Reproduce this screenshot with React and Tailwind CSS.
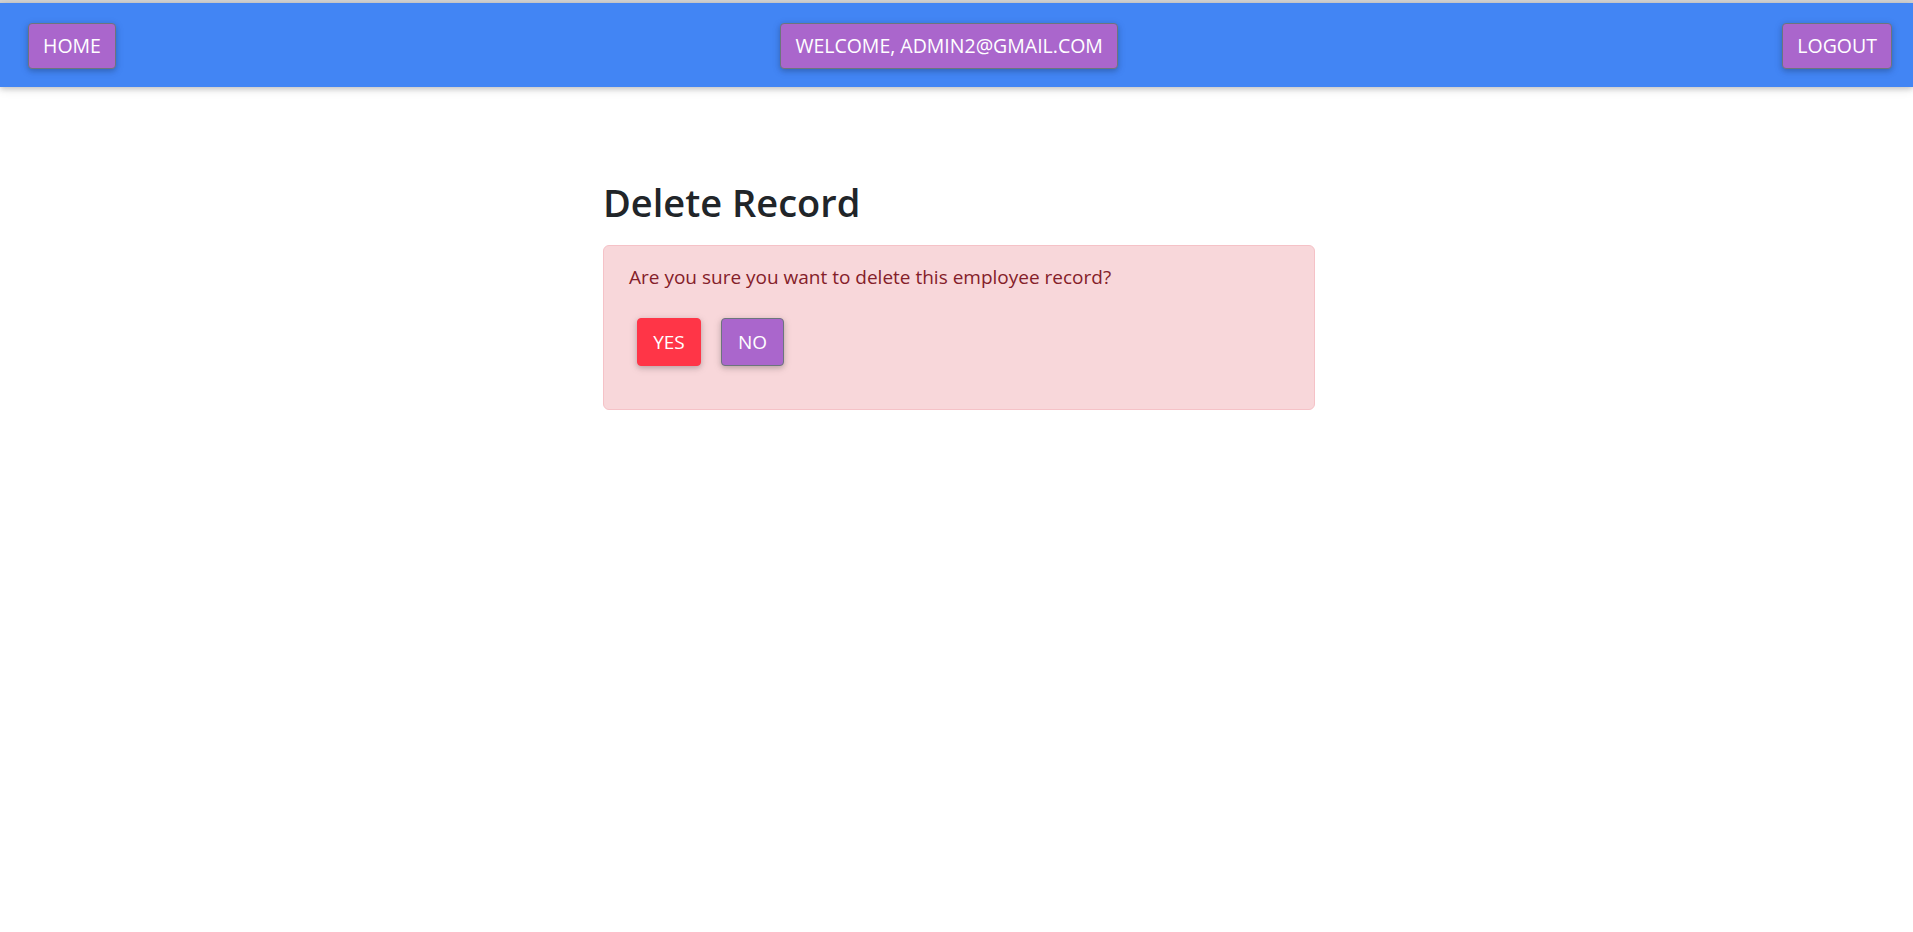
export default function App() {
  const btnShadow = "shadow-[0_2px_5px_0_rgba(0,0,0,0.16),0_2px_10px_0_rgba(0,0,0,0.12)]";
  return (
    <div className="min-h-[932px] bg-white font-['Open_Sans',sans-serif]">
      <div className="border-t-[3px] border-[#d4d4d4]">
        <header className="flex h-[84px] items-center justify-between bg-[#4285f4] pl-[28px] pr-[21px] pt-[1px] shadow-[0_2px_5px_0_rgba(0,0,0,0.16),0_2px_10px_0_rgba(0,0,0,0.12)]">
          <button className={`h-[46px] rounded-[4px] border border-[#6c757d] bg-[#aa66cc] px-[14px] text-[19.5px] text-white ${btnShadow}`}>HOME</button>
          <button className={`h-[46px] rounded-[4px] border border-[#6c757d] bg-[#aa66cc] px-[14px] text-[19.5px] text-white ${btnShadow}`}>WELCOME, ADMIN2@GMAIL.COM</button>
          <button className={`h-[46px] rounded-[4px] border border-[#6c757d] bg-[#aa66cc] px-[14px] text-[19.5px] text-white ${btnShadow}`}>LOGOUT</button>
        </header>
      </div>
      <div className="flex justify-center pl-[5px] pt-[91px]">
        <div className="w-[712px]">
          <h2 className="mb-[19px] text-[38px] font-semibold leading-[48px] text-[#212529]">Delete Record</h2>
          <div className="h-[165px] rounded-[6px] border border-[#f5c2c7] bg-[#f8d7da] pl-[25px] pr-[20px] pt-[16px] text-[#842029]">
            <p className="text-[19px] leading-[30px]">Are you sure you want to delete this employee record?</p>
            <div className="mt-[26px] flex gap-[20px] pl-[8px]">
              <button className={`h-[48px] w-[64px] rounded-[4px] border border-[#ff3547] bg-[#ff3547] text-[19px] text-white ${btnShadow}`}>YES</button>
              <button className={`h-[48px] w-[63px] rounded-[4px] border border-[#6c757d] bg-[#aa66cc] text-[19px] text-white ${btnShadow}`}>NO</button>
            </div>
          </div>
        </div>
      </div>
    </div>
  );
}
